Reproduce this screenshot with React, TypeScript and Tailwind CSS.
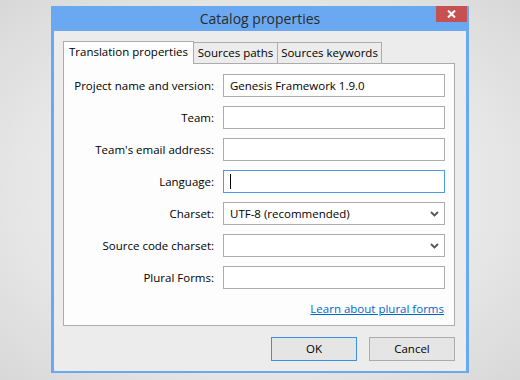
import React from "react";

const font = { fontFamily: '"Open Sans", "Noto Sans", sans-serif' };

function Chevron() {
  return (
    <svg width="9" height="6" viewBox="0 0 9 6" className="shrink-0">
      <path d="M1 1 L4.5 4.5 L8 1" fill="none" stroke="#555" strokeWidth="1.8" />
    </svg>
  );
}

function Row({ label, children }: { label: string; children: React.ReactNode }) {
  return (
    <div className="flex items-center h-[23px]">
      <div className="w-[150px] text-right text-[11.5px] text-black whitespace-nowrap">{label}</div>
      <div className="ml-[9px] w-[222px] h-full">{children}</div>
    </div>
  );
}

function Input({ value, focused }: { value?: string; focused?: boolean }) {
  return (
    <div
      className={`h-full w-full bg-white border flex items-center pl-[6px] text-[11.5px] text-black ${
        focused ? "border-[#4c9ae6]" : "border-[#acacac]"
      }`}
    >
      {focused ? <div className="w-px h-[15px] bg-black" /> : value}
    </div>
  );
}

function Select({ value }: { value?: string }) {
  return (
    <div className="h-full w-full bg-white border border-[#acacac] flex items-center justify-between pl-[6px] pr-[5px] text-[11.5px] text-black">
      <span>{value}</span>
      <Chevron />
    </div>
  );
}

export default function App() {
  return (
    <div
      className="w-[520px] h-[380px] overflow-hidden bg-[radial-gradient(ellipse_at_center,#f1f1f1_0%,#e8e8e8_60%,#d8d8d8_100%)] pl-[51px] pt-[6px]"
      style={font}
    >
      <div className="w-[418px] h-[367px] bg-[#6aa9f1] flex flex-col px-[3px] pb-[2px]">
        {/* Title bar */}
        <div className="h-[25px] relative flex items-center justify-center">
          <span className="text-[14px] text-[#2b2b2b] mt-[-1px]">Catalog properties</span>
          <div className="absolute right-[-1px] top-0 w-[31px] h-[16px] bg-[#c75050] flex items-center justify-center">
            <svg width="9" height="8" viewBox="0 0 9 8">
              <path d="M1 0.5 L8 7.5 M8 0.5 L1 7.5" stroke="#fff" strokeWidth="2" />
            </svg>
          </div>
        </div>
        {/* Client */}
        <div className="flex-1 bg-[#ececec] pt-[10px] pl-[9px] pr-[11px] flex flex-col">
          {/* Tabs */}
          <div className="flex items-end h-[22px] relative z-10">
            <div className="h-[23px] mb-[-1px] w-[131px] bg-[#fdfdfd] border border-b-0 border-[#acacac] text-[11.5px] text-black flex justify-center items-start pt-[1px] whitespace-nowrap">
              Translation properties
            </div>
            <div className="h-[21px] w-[84px] bg-[#ececec] border border-l-0 border-b-0 border-[#acacac] text-[11.5px] text-black flex items-center justify-center whitespace-nowrap">
              Sources paths
            </div>
            <div className="h-[21px] w-[104px] bg-[#ececec] border border-l-0 border-b-0 border-[#acacac] text-[11.5px] text-black flex items-center justify-center whitespace-nowrap">
              Sources keywords
            </div>
          </div>
          {/* Panel */}
          <div className="h-[263px] bg-[#fdfdfd] border border-[#acacac] pt-[10px] flex flex-col gap-[9px]">
            <Row label="Project name and version:">
              <Input value="Genesis Framework 1.9.0" />
            </Row>
            <Row label="Team:">
              <Input />
            </Row>
            <Row label="Team's email address:">
              <Input />
            </Row>
            <Row label="Language:">
              <Input focused />
            </Row>
            <Row label="Charset:">
              <Select value="UTF-8 (recommended)" />
            </Row>
            <Row label="Source code charset:">
              <Select />
            </Row>
            <Row label="Plural Forms:">
              <Input />
            </Row>
            <div className="flex justify-end pr-[10px] mt-[2px]">
              <a className="text-[11.5px] text-[#0066cc] underline">Learn about plural forms</a>
            </div>
          </div>
          {/* Buttons */}
          <div className="flex justify-end gap-[12px] mt-[11px]">
            <button className="w-[86px] h-[24px] border border-[#3c8fe8] bg-[#e5e5e5] text-[11.5px] text-black">
              OK
            </button>
            <button className="w-[86px] h-[24px] border border-[#acacac] bg-[#e5e5e5] text-[11.5px] text-black">
              Cancel
            </button>
          </div>
        </div>
      </div>
    </div>
  );
}
